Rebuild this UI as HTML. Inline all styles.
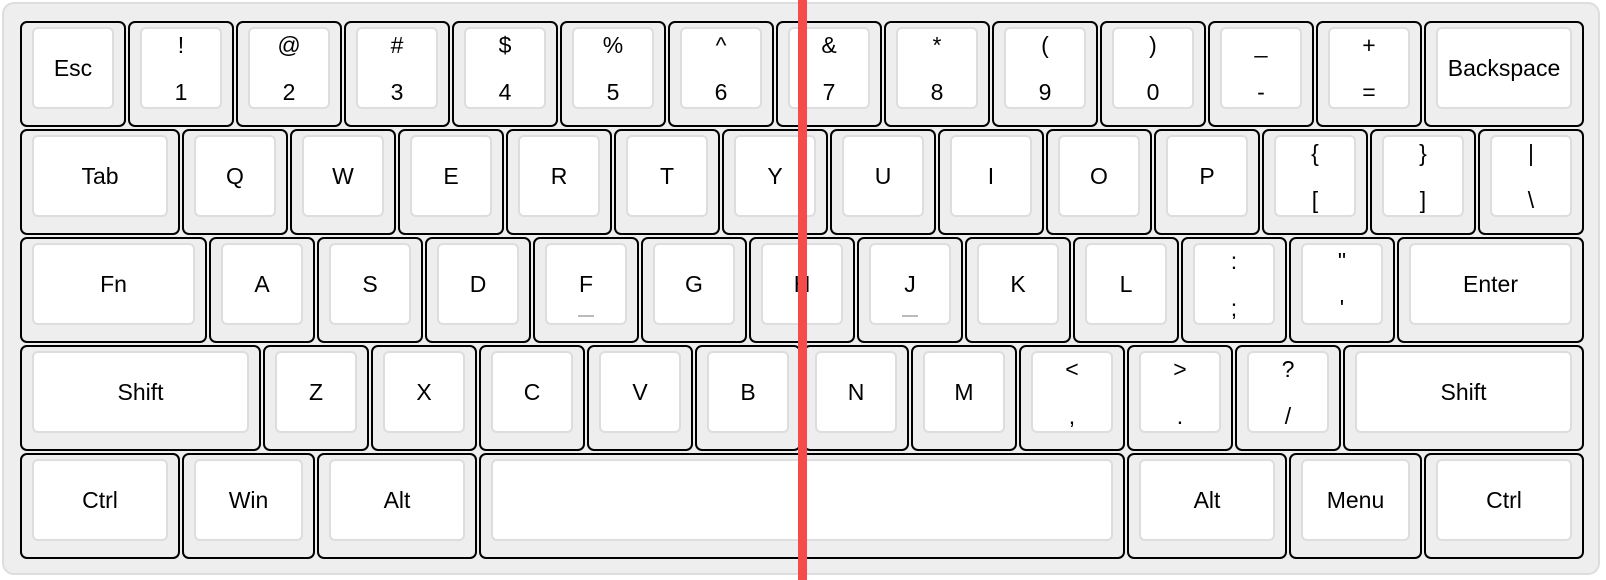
<!DOCTYPE html>
<html><head><meta charset="utf-8"><style>
*{box-sizing:border-box;margin:0;padding:0}
body{width:1606px;height:580px;background:#fff;position:relative;overflow:hidden;font-family:"Liberation Sans",Arial,sans-serif;color:#000}
.board{position:absolute;left:2px;top:2px;width:1598px;height:573px;background:#eee;border:2px solid #ddd;border-radius:12px}
.row{position:absolute;left:20px;display:flex;height:106px}
.k{position:relative;height:106px;width:106px;margin-right:2px;border:2px solid #000;border-radius:7px;background:#eee}
.k .i{position:absolute;left:10px;right:10px;top:4px;bottom:16px;border:2px solid #ddd;border-radius:6px;background:#fff}
.k .s{position:absolute;left:0;right:0;top:0;bottom:0;display:flex;align-items:center;justify-content:center;font-size:23px}
.k .t,.k .b{position:absolute;left:0;right:0;text-align:center;font-size:23px;line-height:26px}
.k .t{top:3px}.k .b{top:50px}
.bump{position:absolute;left:50%;margin-left:-8px;width:16px;height:2px;background:#bbb;bottom:6px}
.red{position:absolute;left:798px;top:0;width:9px;height:580px;background:#f54b4b}
</style></head><body>
<div class="board"></div>

<div class="row" style="top:21px">
<div class="k"><div class="i"><div class="s">Esc</div></div></div>
<div class="k"><div class="i"><div class="t">!</div><div class="b">1</div></div></div>
<div class="k"><div class="i"><div class="t">@</div><div class="b">2</div></div></div>
<div class="k"><div class="i"><div class="t">#</div><div class="b">3</div></div></div>
<div class="k"><div class="i"><div class="t">$</div><div class="b">4</div></div></div>
<div class="k"><div class="i"><div class="t">%</div><div class="b">5</div></div></div>
<div class="k"><div class="i"><div class="t">^</div><div class="b">6</div></div></div>
<div class="k"><div class="i"><div class="t">&amp;</div><div class="b">7</div></div></div>
<div class="k"><div class="i"><div class="t">*</div><div class="b">8</div></div></div>
<div class="k"><div class="i"><div class="t">(</div><div class="b">9</div></div></div>
<div class="k"><div class="i"><div class="t">)</div><div class="b">0</div></div></div>
<div class="k"><div class="i"><div class="t">_</div><div class="b">-</div></div></div>
<div class="k"><div class="i"><div class="t">+</div><div class="b">=</div></div></div>
<div class="k" style="width:160px"><div class="i"><div class="s">Backspace</div></div></div>
</div>

<div class="row" style="top:129px">
<div class="k" style="width:160px"><div class="i"><div class="s">Tab</div></div></div>
<div class="k"><div class="i"><div class="s">Q</div></div></div>
<div class="k"><div class="i"><div class="s">W</div></div></div>
<div class="k"><div class="i"><div class="s">E</div></div></div>
<div class="k"><div class="i"><div class="s">R</div></div></div>
<div class="k"><div class="i"><div class="s">T</div></div></div>
<div class="k"><div class="i"><div class="s">Y</div></div></div>
<div class="k"><div class="i"><div class="s">U</div></div></div>
<div class="k"><div class="i"><div class="s">I</div></div></div>
<div class="k"><div class="i"><div class="s">O</div></div></div>
<div class="k"><div class="i"><div class="s">P</div></div></div>
<div class="k"><div class="i"><div class="t">{</div><div class="b">[</div></div></div>
<div class="k"><div class="i"><div class="t">}</div><div class="b">]</div></div></div>
<div class="k"><div class="i"><div class="t">|</div><div class="b">\</div></div></div>
</div>

<div class="row" style="top:237px">
<div class="k" style="width:187px"><div class="i"><div class="s">Fn</div></div></div>
<div class="k"><div class="i"><div class="s">A</div></div></div>
<div class="k"><div class="i"><div class="s">S</div></div></div>
<div class="k"><div class="i"><div class="s">D</div></div></div>
<div class="k"><div class="i"><div class="s">F</div><div class="bump"></div></div></div>
<div class="k"><div class="i"><div class="s">G</div></div></div>
<div class="k"><div class="i"><div class="s">H</div></div></div>
<div class="k"><div class="i"><div class="s">J</div><div class="bump"></div></div></div>
<div class="k"><div class="i"><div class="s">K</div></div></div>
<div class="k"><div class="i"><div class="s">L</div></div></div>
<div class="k"><div class="i"><div class="t">:</div><div class="b">;</div></div></div>
<div class="k"><div class="i"><div class="t">"</div><div class="b">'</div></div></div>
<div class="k" style="width:187px"><div class="i"><div class="s">Enter</div></div></div>
</div>

<div class="row" style="top:345px">
<div class="k" style="width:241px"><div class="i"><div class="s">Shift</div></div></div>
<div class="k"><div class="i"><div class="s">Z</div></div></div>
<div class="k"><div class="i"><div class="s">X</div></div></div>
<div class="k"><div class="i"><div class="s">C</div></div></div>
<div class="k"><div class="i"><div class="s">V</div></div></div>
<div class="k"><div class="i"><div class="s">B</div></div></div>
<div class="k"><div class="i"><div class="s">N</div></div></div>
<div class="k"><div class="i"><div class="s">M</div></div></div>
<div class="k"><div class="i"><div class="t">&lt;</div><div class="b">,</div></div></div>
<div class="k"><div class="i"><div class="t">&gt;</div><div class="b">.</div></div></div>
<div class="k"><div class="i"><div class="t">?</div><div class="b">/</div></div></div>
<div class="k" style="width:241px"><div class="i"><div class="s">Shift</div></div></div>
</div>

<div class="row" style="top:453px">
<div class="k" style="width:160px"><div class="i"><div class="s">Ctrl</div></div></div>
<div class="k" style="width:133px"><div class="i"><div class="s">Win</div></div></div>
<div class="k" style="width:160px"><div class="i"><div class="s">Alt</div></div></div>
<div class="k" style="width:646px"><div class="i"></div></div>
<div class="k" style="width:160px"><div class="i"><div class="s">Alt</div></div></div>
<div class="k" style="width:133px"><div class="i"><div class="s">Menu</div></div></div>
<div class="k" style="width:160px"><div class="i"><div class="s">Ctrl</div></div></div>
</div>

<div class="red"></div>
</body></html>
